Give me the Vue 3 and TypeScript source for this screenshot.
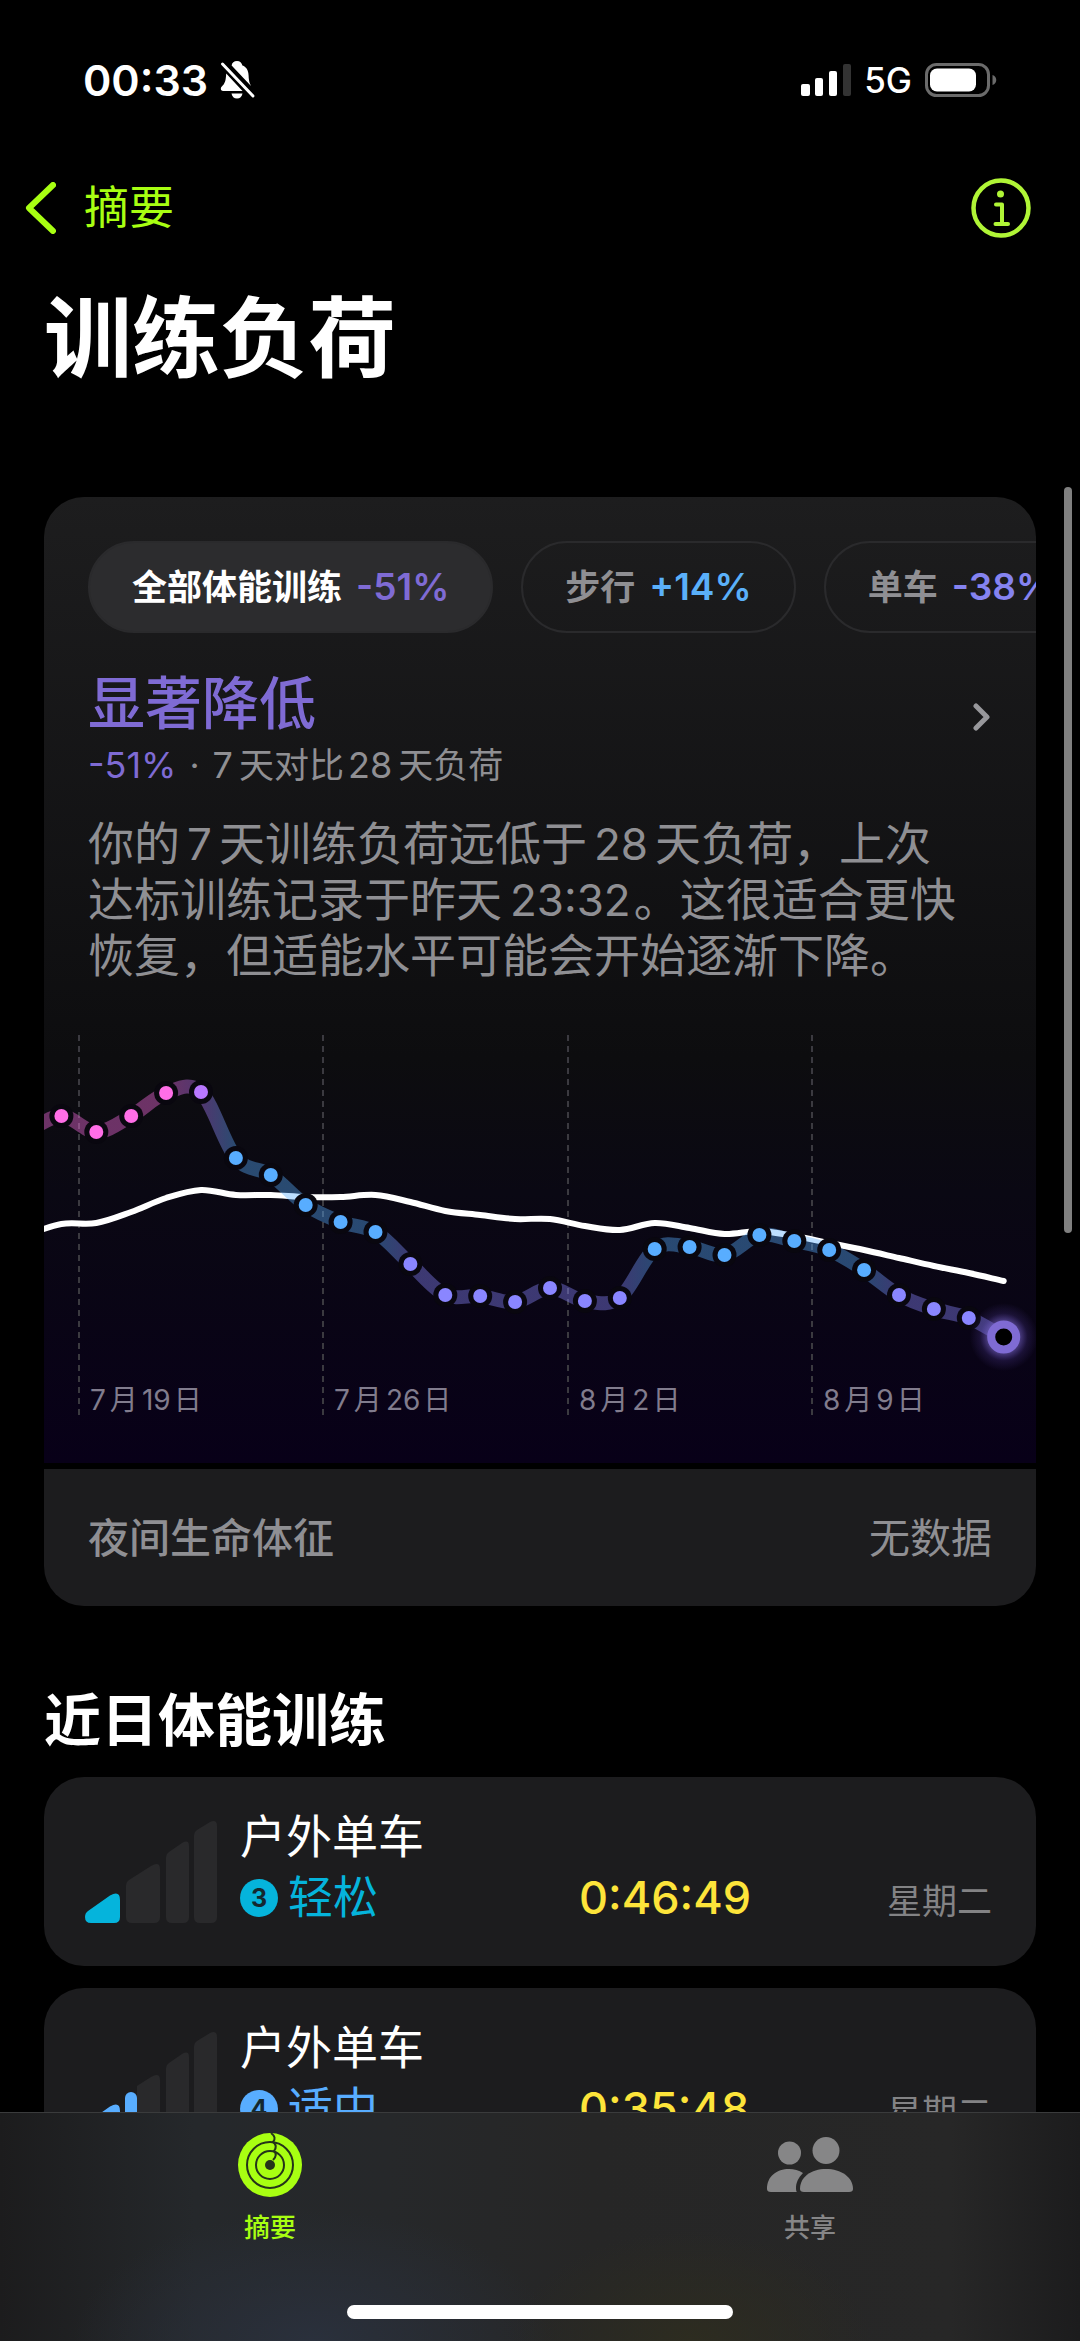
<script setup lang="ts">
interface Chip {
  label: string
  change: string
  tone: string
  active: boolean
}

interface Workout {
  name: string
  level: number
  effort: string
  tone: string
  duration: string
  day: string
}

interface Point {
  x: number
  y: number
}

const chips: Chip[] = [
  { label: '全部体能训练', change: '-51%', tone: 'plum', active: true },
  { label: '步行', change: '+14%', tone: 'sky', active: false },
  { label: '单车', change: '-38%', tone: 'iris', active: false },
]

const workouts: Workout[] = [
  { name: '户外单车', level: 3, effort: '轻松', tone: 'easy', duration: '0:46:49', day: '星期二' },
  { name: '户外单车', level: 4, effort: '适中', tone: 'moderate', duration: '0:35:48', day: '星期二' },
]

const PINK = '#ff6ee7'
const VIOLET = '#b877ff'
const SKY = '#58adff'
const IRIS = '#8a86ff'

// One entry per day, starting a day before the visible range.
const dayWidth = 34.9
const firstDay = 17.4 - dayWidth
const sevenDay: [number, string][] = [
  [97, PINK], [81, PINK], [97, PINK], [81, PINK], [58, PINK], [57, VIOLET],
  [123, SKY], [140, SKY], [170, SKY], [187, SKY], [197, SKY],
  [229, IRIS], [260, IRIS], [261, IRIS], [267, IRIS], [253, IRIS], [266, IRIS], [263, IRIS],
  [214, SKY], [212, SKY], [220, SKY], [200, SKY], [206, SKY], [215, SKY], [235, SKY],
  [260, IRIS], [274, IRIS], [283, IRIS], [302, IRIS],
]
const twentyEightDay: number[] = [
  200, 189, 188, 177, 163, 155, 160, 160, 162, 162, 160, 167, 176, 180, 184,
  184, 191, 195, 188, 193, 199, 196, 201, 208, 215, 223, 231, 238, 246,
]

const dayX = (i: number): number => firstDay + dayWidth * i

// Each day's tangent follows the line between its two neighbours.
function slope(p: Point[], i: number): number {
  const a = p[Math.max(i - 1, 0)]
  const b = p[Math.min(i + 1, p.length - 1)]
  return (b.y - a.y) / (b.x - a.x)
}

function segment(p: Point[], i: number): string {
  const a = p[i]
  const b = p[i + 1]
  const h = dayWidth / 3
  return `C${a.x + h} ${a.y + slope(p, i) * h} ${b.x - h} ${b.y - slope(p, i + 1) * h} ${b.x} ${b.y}`
}

const loadPoints: Point[] = sevenDay.map(([y], i) => ({ x: dayX(i), y }))
const basePoints: Point[] = twentyEightDay.map((y, i) => ({ x: dayX(i), y }))

const basePath =
  `M${basePoints[0].x} ${basePoints[0].y}` +
  basePoints.slice(1).map((_, i) => segment(basePoints, i)).join('')

const loadSegments = loadPoints.slice(1).map((_, i) => ({
  d: `M${loadPoints[i].x} ${loadPoints[i].y}${segment(loadPoints, i)}`,
  from: sevenDay[i][1],
  to: sevenDay[i + 1][1],
  x1: loadPoints[i].x,
  x2: loadPoints[i + 1].x,
}))

const dots = loadPoints.slice(1, -1).map((p, i) => ({ ...p, color: sevenDay[i + 1][1] }))
const today = loadPoints[loadPoints.length - 1]

const weeks = [
  { x: 35, month: '7', day: '19' },
  { x: 279, month: '7', day: '26' },
  { x: 524, month: '8', day: '2' },
  { x: 768, month: '8', day: '9' },
]
</script>

<template>
  <div class="app">
    <header class="status">
      <div class="clock">
        <span>00:33</span>
        <svg class="bell" viewBox="0 0 36 38" aria-hidden="true">
          <path fill="#fff" d="M17 0c-3 0-5 1.800-5.400 4.400L31.500 25.500C29.600 22.500 28.800 20 28.600 14.500 28.400 9.500 26.500 6 22.400 4.600 21.800 1.800 20 0 17 0zM6.200 12.500C5.800 20 5 22.500 1.600 25.800.2 27.300.8 30 3 30H22.500zM11.500 32.500h11C22 35.500 20 37.500 17 37.500s-5-2-5.500-5z" />
          <path stroke="#000" stroke-width="7" d="M3 2.500 33.500 35" />
          <path stroke="#fff" stroke-width="3" stroke-linecap="round" d="M2.500 3 33 35" />
        </svg>
      </div>
      <div class="signals">
        <svg class="bars" viewBox="0 0 50 32" aria-hidden="true">
          <rect x="0" y="20" width="9" height="12" rx="2" fill="#fff" />
          <rect x="14" y="14" width="8" height="18" rx="2" fill="#fff" />
          <rect x="28" y="7" width="8" height="25" rx="2" fill="#fff" />
          <rect x="42" y="0" width="8" height="32" rx="2" fill="#333" />
        </svg>
        <span class="network">5G</span>
        <svg class="battery" viewBox="0 0 72 34" aria-hidden="true">
          <rect x="1.500" y="1.500" width="62" height="31" rx="10" fill="none" stroke="#6b6b6b" stroke-width="3" />
          <rect x="5" y="5.500" width="46" height="23" rx="7" fill="#fff" />
          <path d="M67.500 12c5 1.500 5 8.500 0 10z" fill="#6b6b6b" />
        </svg>
      </div>
    </header>

    <nav class="topbar">
      <a class="back" href="#summary">
        <svg viewBox="0 0 31 52" aria-hidden="true">
          <path d="M28 3 4 26l24 23" fill="none" stroke="#a8ff12" stroke-width="6" stroke-linecap="round" stroke-linejoin="round" />
        </svg>
        <span>摘要</span>
      </a>
      <button class="info" type="button" aria-label="关于">
        <svg viewBox="0 0 60 60" aria-hidden="true">
          <g fill="none" stroke="#b0f536" stroke-linecap="round" stroke-linejoin="round">
            <circle cx="30" cy="30" r="27.500" stroke-width="4.500" />
            <path d="M25 26.500h6V46M24.500 46h12.500" stroke-width="4" />
          </g>
          <circle cx="29.500" cy="16" r="3.500" fill="#b0f536" />
        </svg>
      </button>
    </nav>

    <main>
      <h1>训练负荷</h1>

      <section class="load">
        <div class="panel">
          <div class="chips">
            <button v-for="chip in chips" :key="chip.label" type="button" :class="['chip', { active: chip.active }]">
              <span>{{ chip.label }}</span>
              <b :class="chip.tone">{{ chip.change }}</b>
            </button>
          </div>

          <a class="verdict" href="#detail">
            <span class="verdict-text">
              <strong class="plum">显著降低</strong>
              <span class="compare"><em class="plum">-51%</em><i>·</i><em>7</em>天对比<em class="inner">28</em>天负荷</span>
            </span>
            <svg viewBox="0 0 18 28" aria-hidden="true">
              <path d="M3 3l11 11L3 25" fill="none" stroke="#98989c" stroke-width="5" stroke-linecap="round" stroke-linejoin="round" />
            </svg>
          </a>

          <p class="story">
            你的<em>7</em>天训练负荷远低于<em>28</em>天负荷，上次<br>达标训练记录于昨天<em class="time">23:32</em>。这很适合更快<br>恢复，但适能水平可能会开始逐渐下降。
          </p>

          <svg class="chart" viewBox="0 0 992 428" role="img" aria-label="7 天与 28 天训练负荷">
            <defs>
              <linearGradient v-for="(s, i) in loadSegments" :id="`seg${i}`" :key="i" gradientUnits="userSpaceOnUse" :x1="s.x1" :x2="s.x2" y1="0" y2="0">
                <stop offset="0" :stop-color="s.from" />
                <stop offset="1" :stop-color="s.to" />
              </linearGradient>
              <radialGradient id="glow">
                <stop offset="0.450" stop-color="#7f6bd4" stop-opacity="0.600" />
                <stop offset="0.700" stop-color="#6a50c8" stop-opacity="0.180" />
                <stop offset="1" stop-color="#6a50c8" stop-opacity="0" />
              </radialGradient>
            </defs>
            <line v-for="w in weeks" :key="w.x" class="grid" :x1="w.x" :x2="w.x" y1="0" y2="380" />
            <path class="baseline" :d="basePath" />
            <path v-for="(s, i) in loadSegments" :key="s.d" class="segment" :d="s.d" :stroke="`url(#seg${i})`" />
            <g v-for="d in dots" :key="d.x">
              <circle :cx="d.x" :cy="d.y" r="12" fill="#09070f" />
              <circle :cx="d.x" :cy="d.y" r="7" :fill="d.color" />
            </g>
            <circle :cx="today.x" :cy="today.y" r="34" fill="url(#glow)" />
            <circle :cx="today.x" :cy="today.y" r="12.500" fill="#000" stroke="#7f6bd4" stroke-width="8" />
            <text v-for="w in weeks" :key="w.x" class="date" :x="w.x + 11" y="375">{{ w.month }}<tspan dx="4">月</tspan><tspan dx="4">{{ w.day }}</tspan><tspan dx="3">日</tspan></text>
          </svg>
        </div>

        <div class="vitals">
          <span class="vitals-name">夜间生命体征</span>
          <span>无数据</span>
        </div>
      </section>

      <section class="recent">
        <h2>近日体能训练</h2>
        <a v-for="w in workouts" :key="w.duration" class="workout" href="#workout">
          <svg class="effort-icon" viewBox="0 0 132 102" aria-hidden="true">
            <path :class="w.tone" d="M3 90 25 74.500Q35 69 35 79v17q0 6-6 6H6q-6 0-6-6 0-4 3-6z" />
            <path class="dim" d="M41 65q0-4 3-6L66 45q9-5 9 3v48q0 6-6 6H47q-6 0-6-6zM81 37q0-4 3-6l13-9q7-4 7 3v71q0 6-6 6H87q-6 0-6-6zM109 15q0-4 3-6l13-8q7-3 7 4v91q0 6-6 6h-11q-6 0-6-6z" />
            <g v-if="w.level === 4">
              <path fill="#1c1c1e" d="M38 50h14v52H38z" />
              <rect :class="w.tone" x="40" y="60" width="12" height="42" rx="6" />
            </g>
          </svg>
          <span class="workout-body">
            <span class="workout-name">{{ w.name }}</span>
            <span class="workout-facts">
              <span :class="['effort', w.tone]"><b><span>{{ w.level }}</span></b>{{ w.effort }}</span>
              <span class="duration">{{ w.duration }}</span>
              <span class="day">{{ w.day }}</span>
            </span>
          </span>
        </a>
      </section>
    </main>

    <div class="scroll-thumb" aria-hidden="true"></div>

    <nav class="tabs">
      <div class="tab-row">
        <a class="tab selected" href="#summary">
          <svg viewBox="0 0 66 66" aria-hidden="true">
            <circle cx="33" cy="33" r="32" fill="#a8ff12" />
            <g fill="none" stroke="#24331a" stroke-width="2">
              <circle cx="33" cy="33" r="23" />
              <circle cx="33" cy="33" r="14" />
              <path d="M34 1q6 4.500 2 9 5 4 1 9 4 4-1 9" />
            </g>
            <circle cx="33" cy="33" r="5" fill="#24331a" />
          </svg>
          <span>摘要</span>
        </a>
        <a class="tab" href="#sharing">
          <svg class="people" viewBox="0 0 86 66" aria-hidden="true">
            <g fill="#868687">
              <circle cx="22.500" cy="21" r="11.500" />
              <circle cx="59" cy="18.500" r="13.500" />
              <path d="M0 57C0 44 10 37 22 37c5 0 10 1.500 14 4-5 5-7 10-7 15 0 2 .3 3 .8 4H4q-4 0-4-3z" />
              <path d="M33 57c0-12 11-20 26-20s27 8 27 20q0 3-4 3H37q-4 0-4-3z" />
            </g>
          </svg>
          <span>共享</span>
        </a>
      </div>
      <div class="home"></div>
    </nav>
  </div>
</template>

<style>
html,
body {
  background: #000;
}
</style>

<style scoped>
.app {
  position: relative;
  min-height: 100vh;
  box-sizing: border-box;
  background: #000;
  color: #fff;
  font-family: Inter, "Noto Sans CJK SC", sans-serif;
  font-size: 46px;
  line-height: 56px;
  overflow: hidden;
}

.app * {
  box-sizing: border-box;
}

a {
  color: inherit;
  text-decoration: none;
}

button {
  border: 0;
  padding: 0;
  background: none;
  color: inherit;
  font: inherit;
}

em,
i {
  font-style: normal;
  line-height: 1;
}

svg {
  display: block;
  flex: none;
}

.plum { color: #7f6bd4; }
.sky { color: #5ab0fa; }
.iris { color: #8583f0; }

.status {
  display: flex;
  align-items: center;
  justify-content: space-between;
  height: 160px;
  padding: 0 83px;
}

.clock,
.signals {
  display: flex;
  align-items: center;
}

.clock {
  gap: 12px;
  font-size: 43px;
  font-weight: 600;
}

.bell { width: 36px; height: 38px; }
.bars { width: 50px; height: 32px; }
.battery { width: 72px; height: 34px; }

.network {
  margin: 0 13px;
  font-size: 35px;
  font-weight: 500;
}

.topbar {
  display: flex;
  align-items: center;
  justify-content: space-between;
  height: 96px;
  padding: 0 49px 0 25px;
}

.back {
  display: flex;
  align-items: center;
  gap: 28px;
  color: #a8ff12;
}

.back span { font-size: 45px; }
.back svg { width: 31px; height: 52px; }
.info svg { width: 60px; height: 60px; }

main {
  padding: 0 44px;
}

h1 {
  margin: 30px 0 107px;
  font-size: 88px;
  font-weight: 700;
  line-height: 104px;
}

.load {
  display: flex;
  flex-direction: column;
  gap: 6px;
}

.panel {
  padding-top: 44px;
  border-radius: 40px 40px 0 0;
  background: linear-gradient(#1d1d1e, #0d0d0f 58%, #0a0813 72%, #080018);
  overflow: hidden;
}

.chips {
  display: flex;
  gap: 28px;
  padding-left: 44px;
  overflow: hidden;
}

.chip {
  display: flex;
  flex: none;
  align-items: center;
  gap: 14px;
  height: 92px;
  padding: 0 42px;
  border: 2px solid #2a2a2c;
  border-radius: 46px;
  color: #8f8f93;
  font-size: 35px;
  font-weight: 600;
  line-height: 44px;
}

.chip b {
  font-size: 37px;
  font-weight: 600;
}

.chip.active {
  background: #2c2c2e;
  color: #fff;
}

.verdict {
  display: flex;
  align-items: center;
  justify-content: space-between;
  margin-top: 37px;
  padding: 0 45px 0 44px;
}

.verdict svg {
  width: 18px;
  height: 28px;
  margin-bottom: 24px;
}

.verdict-text {
  display: flex;
  flex-direction: column;
  gap: 5px;
}

.verdict strong {
  font-size: 57px;
  font-weight: 500;
  line-height: 68px;
}

.compare {
  color: #8f8f93;
  font-size: 35px;
  line-height: 44px;
}

.compare i {
  margin: 0 13px;
}

.compare em {
  margin-right: 6px;
  font-size: 36px;
}

.compare .plum {
  margin-right: 0;
}

.compare .inner {
  margin-left: 4px;
}

.story {
  margin: 28px 44px 0;
  color: #8f8f93;
  white-space: nowrap;
}

.story em {
  margin: 0 7px;
  font-size: 44px;
}

.story .time {
  margin: 0 3px 0 8px;
}

.chart {
  width: 100%;
  height: auto;
  margin-top: 52px;
}

.grid {
  stroke: #3b3a40;
  stroke-width: 2;
  stroke-dasharray: 6 5;
}

.baseline {
  fill: none;
  stroke: #fff;
  stroke-width: 6;
  stroke-linecap: round;
}

.segment {
  fill: none;
  stroke-width: 14;
  stroke-opacity: 0.4;
}

.date {
  fill: #817c8d;
  font-size: 28px;
}

.vitals {
  display: flex;
  align-items: center;
  justify-content: space-between;
  height: 137px;
  padding: 0 44px;
  border-radius: 0 0 40px 40px;
  background: #1c1c1e;
  color: #8f8f93;
  font-size: 41px;
}

.vitals-name {
  font-weight: 500;
}

.recent {
  display: flex;
  flex-direction: column;
  gap: 22px;
}

h2 {
  margin: 81px 0 0;
  font-size: 57px;
  font-weight: 700;
  line-height: 68px;
}

.workout {
  display: flex;
  align-items: flex-start;
  gap: 23px;
  padding: 28px 44px 37px 41px;
  border-radius: 40px;
  background: #1c1c1e;
}

.effort-icon {
  width: 132px;
  height: 102px;
  margin-top: 16px;
}

.dim { fill: #29292b; }
.easy { color: #05b4dc; fill: #05b4dc; }
.moderate { color: #58adff; fill: #58adff; }

.workout-body {
  display: flex;
  flex: 1;
  flex-direction: column;
  line-height: 62px;
}

.workout-facts {
  display: grid;
  grid-template-columns: 339px 1fr auto;
  align-items: center;
}

.effort {
  display: flex;
  align-items: center;
  gap: 10px;
  font-size: 45px;
}

.effort b {
  width: 38px;
  height: 38px;
  border-radius: 50%;
  background: currentColor;
  font-size: 25px;
  line-height: 38px;
  text-align: center;
}

.effort b span {
  color: #14282f;
}

.duration {
  color: #fde43a;
  font-size: 45px;
  font-weight: 500;
}

.day {
  padding-top: 6px;
  color: #838385;
  font-size: 35px;
  line-height: 56px;
}

.scroll-thumb {
  position: absolute;
  top: 487px;
  right: 8px;
  width: 8px;
  height: 746px;
  border-radius: 4px;
  background: #808080;
}

.tabs {
  position: fixed;
  right: 0;
  bottom: 0;
  left: 0;
  display: flex;
  flex-direction: column;
  align-items: center;
  justify-content: space-between;
  height: 229px;
  padding: 19px 0 22px;
  border-top: 1px solid #3a3b3c;
  background:
    radial-gradient(ellipse 240px 130px at 29% 100%, #2a303c, transparent),
    radial-gradient(ellipse 180px 110px at 64% 100%, #2d2c20, transparent),
    linear-gradient(90deg, #1c1c1d, #25282b 18%, #26282a 36%, #262626 55%, #272727 88%, #1c1c1d);
}

.tab-row {
  display: flex;
  width: 100%;
}

.tab {
  display: flex;
  flex: 1;
  flex-direction: column;
  align-items: center;
  gap: 12px;
  color: #868687;
  font-size: 26px;
  font-weight: 500;
  line-height: 36px;
}

.tab.selected { color: #a8ff12; }
.tab svg { width: 66px; height: 66px; }
.tab .people { width: 86px; }

.home {
  width: 386px;
  height: 14px;
  border-radius: 7px;
  background: #fff;
}
</style>
